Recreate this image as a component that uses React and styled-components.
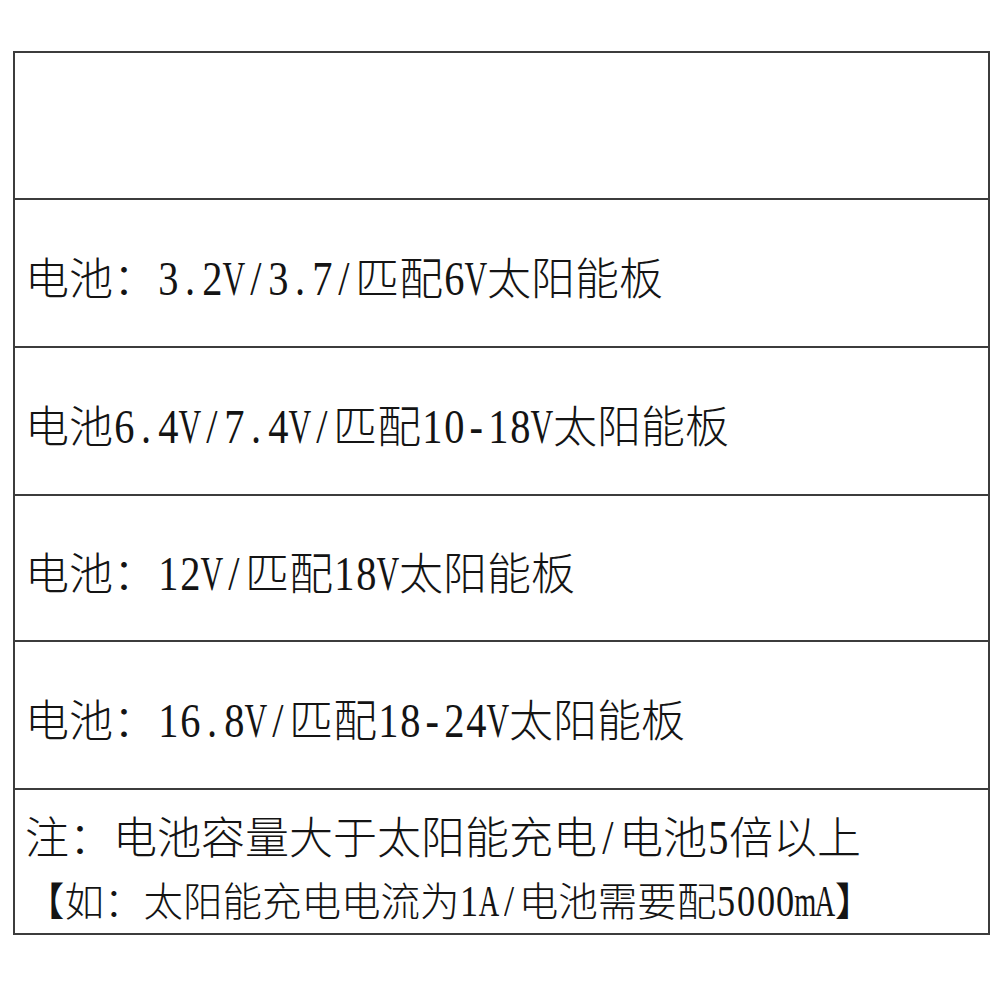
import React from "react";
import styled, { createGlobalStyle } from "styled-components";

const Global = createGlobalStyle`
  html, body { margin: 0; padding: 0; background: #ffffff; }
  body { font-family: "Noto Sans CJK SC", "Liberation Serif", serif; color: #141414; }
`;

const Page = styled.div`
  width: 1000px;
  height: 1000px;
  padding: 51px 10px 0 13px;
  box-sizing: border-box;
`;

const Table = styled.div`
  display: flex;
  flex-direction: column;
  border: 2px solid #3c3c3c;
  width: 977px;
  box-sizing: border-box;
`;

const Row = styled.div`
  display: flex;
  align-items: center;
  height: ${(p) => p.$h || 146}px;
  padding: 12px 10px 0 10px;
  box-sizing: border-box;
  border-top: ${(p) => (p.$first ? "none" : "2px solid #3c3c3c")};
`;

const NoteRow = styled.div`
  display: flex;
  flex-direction: column;
  align-items: flex-start;
  gap: 17px;
  height: 145px;
  padding: 23px 10px 0 10px;
  box-sizing: border-box;
  border-top: 2px solid #3c3c3c;
`;

const Line = styled.div`
  font-size: ${(p) => p.$size}px;
  line-height: 1;
  white-space: nowrap;
  font-family: "Noto Sans CJK SC", sans-serif;
  font-weight: 300;
`;

const Half = styled.span`
  display: inline-flex;
  justify-content: center;
  width: 0.5em;
  overflow: visible;
  white-space: pre;
`;

const HalfGlyph = styled.span`
  font-family: "Liberation Serif", serif;
  font-weight: 400;
  font-size: 1.12em;
  display: inline-block;
  transform: scaleX(${(p) => (p.$wide ? 0.64 : 0.82)});
`;

const WIDE = new Set(["V", "m", "A", "M", "W"]);

function Mixed({ text }) {
  const parts = [];
  let buf = "";
  [...text].forEach((ch, i) => {
    if (ch.charCodeAt(0) < 128) {
      if (buf) {
        parts.push(buf);
        buf = "";
      }
      parts.push(
        <Half key={i}>
          <HalfGlyph $wide={WIDE.has(ch)}>{ch}</HalfGlyph>
        </Half>
      );
    } else {
      buf += ch;
    }
  });
  if (buf) parts.push(buf);
  return <>{parts}</>;
}

const rows = [
  "电池：3.2V/3.7/匹配6V太阳能板",
  "电池6.4V/7.4V/匹配10-18V太阳能板",
  "电池：12V/匹配18V太阳能板",
  "电池：16.8V/匹配18-24V太阳能板",
];

export default function App() {
  return (
    <>
      <Global />
      <Page>
        <Table>
          <Row $first $h={145} />
          {rows.map((r, i) => (
            <Row key={i} $h={i === 2 ? 146 : 148}>
              <Line $size={44}>
                <Mixed text={r} />
              </Line>
            </Row>
          ))}
          <NoteRow>
            <Line $size={44}>
              <Mixed text="注：电池容量大于太阳能充电/电池5倍以上" />
            </Line>
            <Line $size={39.5}>
              <Mixed text="【如：太阳能充电电流为1A/电池需要配5000mA】" />
            </Line>
          </NoteRow>
        </Table>
      </Page>
    </>
  );
}
